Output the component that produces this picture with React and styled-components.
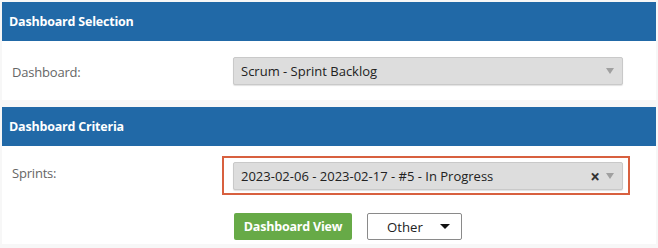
import React from "react";
import styled, { createGlobalStyle } from "styled-components";

const Global = createGlobalStyle`
  html, body {
    margin: 0;
    padding: 0;
    background: #f7f7f7;
    font-family: "Open Sans", "Noto Sans", sans-serif;
  }
`;

const Page = styled.div`
  width: 658px;
  height: 248px;
  box-sizing: border-box;
  padding: 2px 2px 0 2px;
  display: flex;
  flex-direction: column;
  gap: 7px;
`;

const Panel = styled.section`
  background: #fff;
  display: flex;
  flex-direction: column;
`;

const Heading = styled.div`
  height: 39px;
  background: #2169a7;
  color: #fff;
  font-weight: 700;
  font-size: 12.5px;
  letter-spacing: -0.2px;
  display: flex;
  align-items: center;
  padding-left: 7px;
`;

const Body = styled.div`
  display: flex;
  flex-direction: column;
  padding: ${(p) => p.$pad};
  gap: 23px;
`;

const Row = styled.div`
  display: grid;
  grid-template-columns: 221px 390px;
  padding-left: 10px;
  align-items: start;
`;

const Label = styled.div`
  color: #666;
  font-size: 13px;
  letter-spacing: -0.2px;
  padding-top: ${(p) => p.$top}px;
`;

const Highlight = styled.div`
  margin: -6px -7px -5px -11px;
  padding: 4px 5px 3px 9px;
  border: 2px solid #d8603f;
`;

const Select = styled.div`
  height: 28px;
  box-sizing: border-box;
  border: 1px solid #c9c9c9;
  border-radius: 2px;
  background: #dddddd;
  box-shadow: 0 1px 1px rgba(0, 0, 0, 0.12);
  display: flex;
  align-items: center;
  padding: 0 8px 0 7px;
  font-size: 13px;
  color: #222;
`;

const Value = styled.span`
  flex: 1;
`;

const Clear = styled.span`
  font-size: 17px;
  line-height: 1;
  font-weight: 700;
  color: #333;
  margin-right: 6px;
`;

const Arrow = styled.span`
  width: 0;
  height: 0;
  border-left: ${(p) => p.$w}px solid transparent;
  border-right: ${(p) => p.$w}px solid transparent;
  border-top: ${(p) => p.$h}px solid ${(p) => p.$color};
`;

const Actions = styled.div`
  display: flex;
  gap: 15px;
  padding-left: 232px;
`;

const Green = styled.button`
  height: 27px;
  width: 118px;
  border: none;
  border-radius: 2px;
  background: #67aa47;
  color: #fff;
  font-family: inherit;
  font-weight: 700;
  font-size: 12.5px;
  letter-spacing: -0.2px;
  padding: 0;
`;

const Outline = styled.button`
  height: 27px;
  width: 95px;
  box-sizing: border-box;
  border: 1px solid #8a8a8a;
  border-radius: 2px;
  background: #fff;
  color: #222;
  font-family: inherit;
  font-size: 13.2px;
  display: flex;
  align-items: center;
  justify-content: space-between;
  padding: 0 11px 0 19px;
`;

export default function App() {
  return (
    <>
      <Global />
      <Page>
        <Panel>
          <Heading>Dashboard Selection</Heading>
          <Body $pad="16px 0 15px 0">
            <Row>
              <Label $top={6}>Dashboard:</Label>
              <Select>
                <Value>Scrum - Sprint Backlog</Value>
                <Arrow $w={4} $h={6} $color="#a0a0a0" />
              </Select>
            </Row>
          </Body>
        </Panel>
        <Panel>
          <Heading>Dashboard Criteria</Heading>
          <Body $pad="16px 0 4px 0">
            <Row>
              <Label $top={2}>Sprints:</Label>
              <Highlight>
                <Select>
                  <Value>2023-02-06 - 2023-02-17 - #5 - In Progress</Value>
                  <Clear>×</Clear>
                  <Arrow $w={4} $h={6} $color="#a0a0a0" />
                </Select>
              </Highlight>
            </Row>
            <Actions>
              <Green>Dashboard View</Green>
              <Outline>
                Other
                <Arrow $w={5} $h={5} $color="#111" />
              </Outline>
            </Actions>
          </Body>
        </Panel>
      </Page>
    </>
  );
}
